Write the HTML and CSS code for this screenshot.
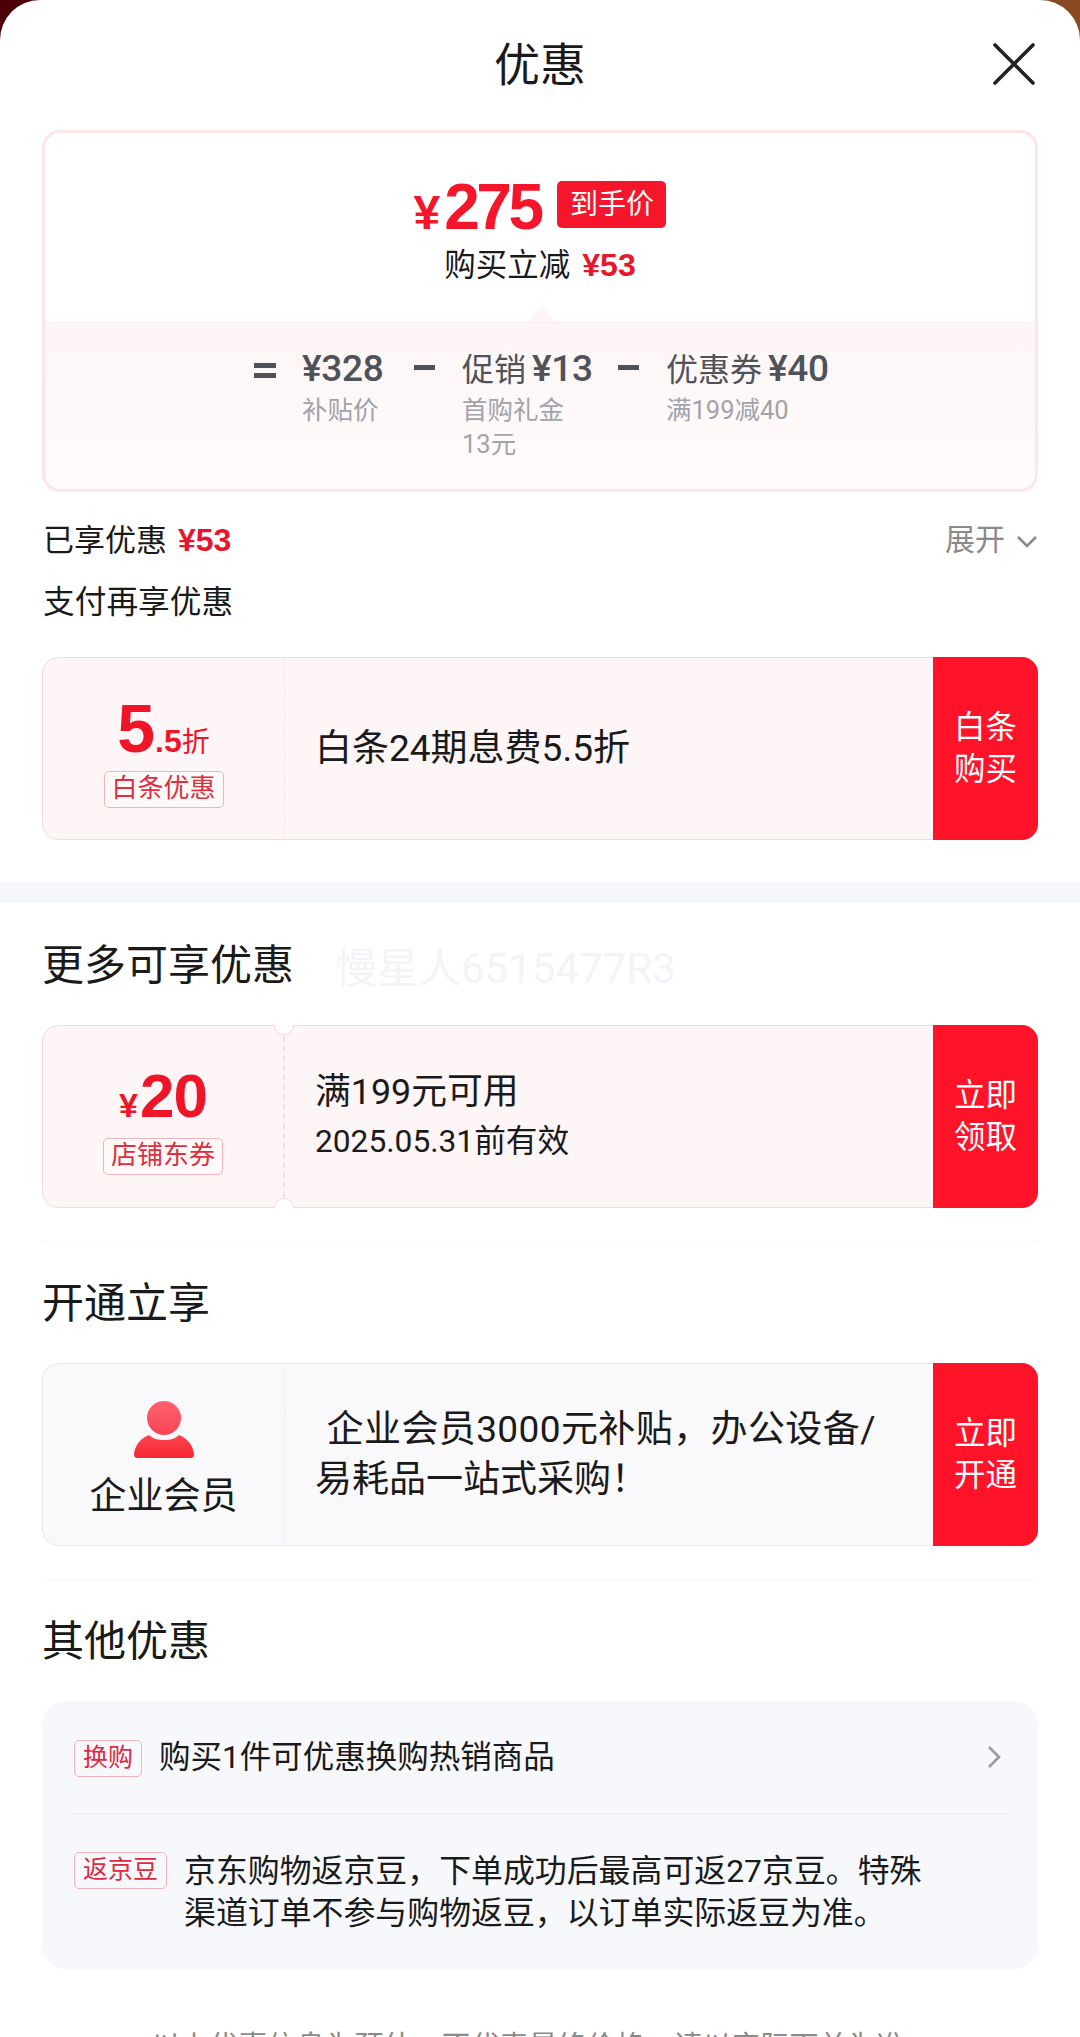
FILE: index.html
```html
<!DOCTYPE html>
<html lang="zh-CN">
<head>
<meta charset="utf-8">
<title>优惠</title>
<link rel="stylesheet" href="styles.css">
</head>
<body>
<div class="sheet">
  <header class="header">
    <h1 class="title">优惠</h1>
    <svg class="close" viewBox="0 0 42 42" aria-hidden="true"><path d="M2 2L40 40M40 2L2 40"/></svg>
  </header>

  <section class="summary">
    <div class="summary-top">
      <div class="price-row">
        <span class="price"><span class="price-sign">¥</span>275</span>
        <span class="price-tag">到手价</span>
      </div>
      <div class="reduce">购买立减<span class="reduce-val">¥53</span></div>
      <span class="notch-up"></span>
    </div>
    <div class="summary-bottom">
      <span class="op op-eq"></span>
      <div class="term term-a"><div class="term-main"><span class="num num-solo">¥328</span></div><div class="term-sub">补贴价</div></div>
      <span class="op op-minus"></span>
      <div class="term term-b"><div class="term-main">促销 <span class="num">¥13</span></div><div class="term-sub">首购礼金<br>13元</div></div>
      <span class="op op-minus"></span>
      <div class="term term-c"><div class="term-main">优惠券 <span class="num">¥40</span></div><div class="term-sub">满199减40</div></div>
    </div>
  </section>

  <div class="saved-row">
    <div class="saved">已享优惠<span class="saved-val">¥53</span></div>
    <div class="expand">展开<svg class="chev-down" viewBox="0 0 22 14" aria-hidden="true"><path d="M2 2L11 11L20 2"/></svg></div>
  </div>
  <div class="pay-row">支付再享优惠</div>

  <article class="coupon coupon-pink coupon-first">
    <div class="coupon-left">
      <div class="rate"><span class="rate-big">5</span><span class="rate-small">.5</span><span class="rate-unit">折</span></div>
      <span class="coupon-tag">白条优惠</span>
    </div>
    <div class="coupon-body"><div class="line-big">白条24期息费5.5折</div></div>
    <div class="coupon-btn">白条<br>购买</div>
  </article>

  <div class="band"></div>

  <div class="sec-title sec-more">更多可享优惠<span class="watermark">慢星人6515477R3</span></div>
  <article class="coupon coupon-pink coupon-notched">
    <span class="notch notch-t"></span><span class="notch notch-b"></span>
    <div class="coupon-left">
      <div class="amount"><span class="amount-sign">¥</span>20</div>
      <span class="coupon-tag">店铺东券</span>
    </div>
    <div class="coupon-body">
      <div class="line-a">满199元可用</div>
      <div class="line-b">2025.05.31前有效</div>
    </div>
    <div class="coupon-btn">立即<br>领取</div>
  </article>

  <div class="rule"></div>

  <div class="sec-title">开通立享</div>
  <article class="coupon coupon-grey">
    <div class="coupon-left">
      <svg class="person" viewBox="0 0 60 57" aria-hidden="true">
        <defs><linearGradient id="pg" x1="0" y1="0" x2="0" y2="1"><stop offset="0" stop-color="#ff6270"/><stop offset="1" stop-color="#fa4452"/></linearGradient>
        <linearGradient id="pb" x1="0" y1="0" x2="0" y2="1"><stop offset="0" stop-color="#fb4650"/><stop offset="1" stop-color="#f5262f"/></linearGradient></defs>
        <circle cx="30" cy="17" r="17" fill="url(#pg)"/>
        <path fill="url(#pb)" d="M15 34C19 38 24 39 30 39C36 39 41 38 45 34C53 37 59 44 60 53Q60 57 57 57H3Q0 57 0 53C1 44 7 37 15 34Z"/>
      </svg>
      <div class="member">企业会员</div>
    </div>
    <div class="coupon-body"><div class="line-big"><span class="line-first">&nbsp;企业会员3000元补贴，办公设备/</span><br>易耗品一站式采购！</div></div>
    <div class="coupon-btn">立即<br>开通</div>
  </article>

  <div class="rule"></div>

  <div class="sec-title">其他优惠</div>
  <section class="others">
    <div class="other-row">
      <span class="mini-tag">换购</span>
      <span class="other-text">购买1件可优惠换购热销商品</span>
      <svg class="chev-right" viewBox="0 0 14 24" aria-hidden="true"><path d="M2 2L12 12L2 22"/></svg>
    </div>
    <div class="other-rule"></div>
    <div class="other-row2">
      <span class="mini-tag">返京豆</span>
      <span class="other-text2">京东购物返京豆，下单成功后最高可返27京豆。特殊<br>渠道订单不参与购物返豆，以订单实际返豆为准。</span>
    </div>
  </section>

  <div class="footnote">以上优惠信息为预估，不代表最终价格，请以实际下单为准<span class="help">?</span></div>
</div>
</body>
</html>
```
FILE: styles.css
```css
* { box-sizing: border-box; }
html, body { margin: 0; height: 2037px; overflow: hidden; }
body {
  background: linear-gradient(90deg, #4a0005 0%, #7a1a10 60%, #8a4a20 100%);
  font-family: Roboto, "Noto Sans CJK SC", sans-serif;
  color: #1a1a1a;
}
.sheet {
  background: #fff;
  border-radius: 40px 40px 0 0;
  height: 2037px;
  overflow: hidden;
}
.header { position: relative; height: 130px; display: flex; justify-content: center; }
.title { margin: 0; font-size: 46px; font-weight: 400; line-height: 130px; }
.close { position: absolute; left: 993px; top: 43px; width: 42px; height: 42px; }
.close path { stroke: #222; stroke-width: 3.6; stroke-linecap: round; fill: none; }

.summary {
  margin: 0 42px;
  height: 362px;
  border: 3px solid #fde5ea;
  border-radius: 18px;
  overflow: hidden;
  display: flex;
  flex-direction: column;
}
.summary-top { position: relative; height: 189px; display: flex; flex-direction: column; align-items: center; }
.price-row { display: flex; align-items: center; height: 68px; margin-top: 40px; }
.price { font-family: "Liberation Sans", sans-serif; font-weight: 700; font-size: 64px; letter-spacing: -3.5px; color: #f5162b; line-height: 68px; position: relative; top: 3px; }
.price-sign { font-size: 48px; letter-spacing: 0; margin-right: 4px; }
.price-tag { background: #f6162c; color: #fff; font-size: 28px; line-height: 47px; height: 47px; width: 109px; text-align: center; border-radius: 5px; margin-left: 17px; margin-top: -6px; }
.reduce { font-size: 31.5px; line-height: 44px; margin-top: 2px; }
.reduce-val { color: #e8162d; font-family: "Liberation Sans", sans-serif; font-weight: 700; font-size: 32px; margin-left: 12px; }
.notch-up {
  position: absolute; left: 483px; bottom: 0; width: 28px; height: 18px;
  background: #fdf5f6;
  clip-path: polygon(50% 0, 100% 100%, 0 100%);
}
.summary-bottom {
  flex: 1;
  background: linear-gradient(180deg, #fdf5f6 0%, #fffbfb 100%);
  border-top: 1px solid #fbeef0;
  display: flex;
  align-items: flex-start;
  padding: 24px 0 0 209px;
  color: #50525a;
}
.op { display: block; }
.op-eq { width: 22px; height: 15px; margin-top: 16px; border-top: 5px solid #50525a; border-bottom: 5px solid #50525a; }
.op-minus { width: 21px; height: 5px; margin-top: 18px; background: #50525a; }
.term-a { margin-left: 26px; width: 112px; }
.term-b { margin-left: 27px; width: 156px; }
.term-c { margin-left: 27px; }
.term-main { font-size: 32px; line-height: 44px; white-space: nowrap; }
.num { font-size: 37px; font-weight: 500; letter-spacing: -0.3px; margin-left: -2px; }
.num-solo { margin-left: 0; }
.term-sub { font-size: 25.5px; line-height: 34px; margin-top: 1px; color: #a2a2aa; white-space: nowrap; }

.saved-row { margin: 21px 42px 0 43px; height: 48px; display: flex; justify-content: space-between; align-items: center; }
.saved { font-size: 31px; }
.saved-val { color: #e8162d; font-family: "Liberation Sans", sans-serif; font-weight: 700; font-size: 32px; margin-left: 11px; }
.expand { font-size: 30px; color: #8a8a8a; display: flex; align-items: center; }
.chev-down { width: 22px; height: 14px; margin-left: 11px; margin-top: 10px; }
.chev-down path { stroke: #8a8a8a; stroke-width: 2.6; fill: none; }
.pay-row { margin: 18px 42px 0 43px; height: 48px; font-size: 31.7px; line-height: 48px; }

.coupon { position: relative; margin: 0 42px; height: 183px; border: 1px solid; border-radius: 16px; display: flex; }
.coupon-first { margin-top: 30px; }
.coupon-notched { margin-top: 31px; }
.coupon-grey { margin-top: 31px; background: #f9f9fc; border-color: #e8e8ed; }
.coupon-pink { background: #fdf5f6; border-color: #f3dadc; }
.coupon-left {
  width: 242px;
  border-right: 1px dashed #f2e2e4;
  display: flex; flex-direction: column; align-items: center; justify-content: center;
}
.coupon-grey .coupon-left { border-right-color: #eeeef2; justify-content: flex-start; padding-top: 37px; }
.coupon-notched .coupon-left { border-right: 2px dashed #f5dfe2; }
.notch { position: absolute; left: 231px; width: 20px; height: 20px; border-radius: 50%; background: #fff; border: 1px solid #f3dadc; }
.notch-t { top: -11px; clip-path: inset(10px -1px -1px -1px); }
.notch-b { bottom: -11px; clip-path: inset(-1px -1px 10px -1px); }
.coupon-body { flex: 1; padding-left: 30px; display: flex; flex-direction: column; justify-content: center; }
.coupon-btn {
  width: 105px; margin: -1px -1px -1px 0;
  background: #fe1329; color: #fff;
  border-radius: 0 16px 16px 0;
  font-size: 31.5px; line-height: 42px;
  display: flex; align-items: center; justify-content: center; text-align: center;
}
.rate { color: #ef1528; font-family: "Liberation Sans", sans-serif; font-weight: 700; line-height: 62px; height: 62px; white-space: nowrap; margin-top: 7px; }
.rate-big { font-size: 68px; }
.rate-small { font-size: 32px; }
.rate-unit { font-family: "Noto Sans CJK SC", sans-serif; font-weight: 400; font-size: 28px; }
.coupon-tag { margin-top: 12px; width: 120px; height: 37px; line-height: 33px; border: 1px solid #eeb4ba; border-radius: 5px; color: #dc3040; font-size: 26px; text-align: center; background: #fff8f8; }
.amount { color: #ef1528; font-family: "Liberation Sans", sans-serif; font-weight: 700; font-size: 62px; line-height: 62px; letter-spacing: -1px; height: 62px; margin-top: 7px; }
.amount-sign { font-size: 34px; letter-spacing: 0; margin-right: 2px; }
.coupon-notched .coupon-tag { margin-top: 11px; }
.line-big { font-size: 37px; line-height: 50px; }
.line-first { letter-spacing: 0.4px; margin-left: 2px; }
.line-a { font-size: 35.8px; line-height: 49px; }
.line-b { font-size: 31.7px; line-height: 49px; }
.band { height: 21px; margin-top: 42px; background: #f6f7fb; }
.sec-title { margin: 30px 42px 0; height: 60px; font-size: 42px; line-height: 64px; font-weight: 400; position: relative; }
.sec-more { margin-top: 31px; }
.watermark { position: absolute; left: 293px; top: 3px; font-size: 42px; color: #f3f4f7; white-space: nowrap; }
.rule { height: 1px; margin: 33px 42px 0; background: #f6f6f6; }
.person { flex: none; width: 60px; height: 57px; }
.member { font-size: 37px; line-height: 50px; margin-top: 14px; }
.others { margin: 31px 42px 0; height: 268px; background: #f7f8fc; border-radius: 24px; padding: 0 32px; }
.other-row { height: 112px; display: flex; align-items: center; }
.mini-tag { flex: none; height: 37px; line-height: 33px; padding: 0 8px; border: 1px solid #f0b4bd; border-radius: 5px; color: #dc2a40; font-size: 25px; }
.other-row .mini-tag { position: relative; top: 1px; }
.other-text { font-size: 31.5px; line-height: 40px; margin-left: 17px; flex: 1; position: relative; top: 1px; }
.chev-right { width: 14px; height: 24px; margin-right: 5px; }
.chev-right path { stroke: #9b9b9b; stroke-width: 2.6; fill: none; }
.other-rule { height: 1px; background: #e8e8ee; }
.other-row2 { display: flex; align-items: flex-start; padding-top: 38px; }
.other-text2 { font-size: 31.9px; line-height: 42px; margin-left: 17px; margin-top: -2px; white-space: nowrap; }
.footnote { margin-top: 58px; text-align: center; font-size: 29px; line-height: 40px; color: #8a8a8a; white-space: nowrap; }
.help { display: inline-block; width: 20px; height: 20px; line-height: 20px; margin-left: 3px; border-radius: 50%; background: #8a8a8a; color: #fff; font-size: 15px; vertical-align: 5px; }
```
